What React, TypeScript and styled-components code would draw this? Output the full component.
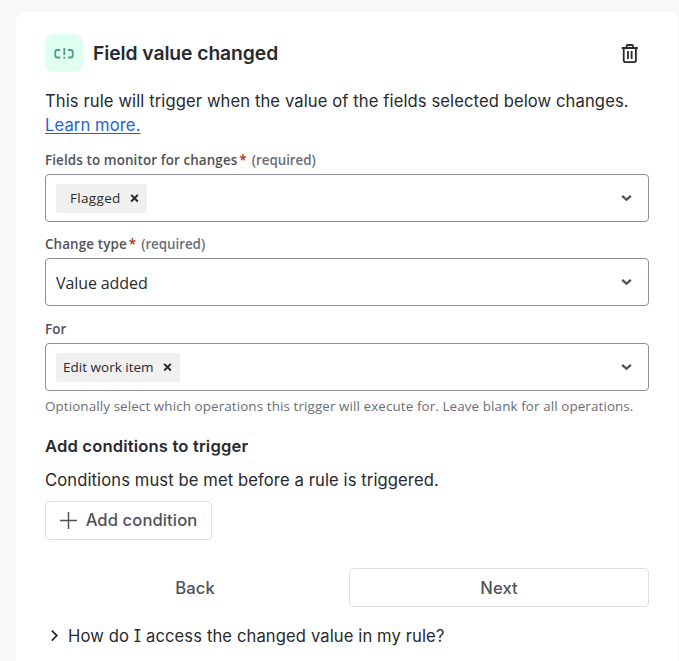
import React from "react";
import styled, { createGlobalStyle } from "styled-components";

const Global = createGlobalStyle`
  *, *::before, *::after { box-sizing: border-box; }
  body { margin: 0; background: #f8f8f8; overflow: hidden; color: #292a2e; }
  h1, h2, p { margin: 0; }
  button { font: inherit; letter-spacing: inherit; color: inherit; background: none; border: 0; padding: 0; cursor: pointer; }
  svg { display: block; flex: none; }
`;

const sans = `Inter, "Liberation Sans", sans-serif`;
const formSans = `"Open Sans", "Noto Sans", sans-serif`;

const Page = styled.main`
  height: 661px;
  padding: 12px 1px 0 16px;
  overflow: hidden;
  font: 400 16px/24px ${sans};
`;

const Card = styled.section`
  height: 700px;
  padding: 22px 29px 0;
  background: #fff;
  border-radius: 9px;
`;

const Header = styled.header`
  display: flex;
  align-items: center;
  height: 38px;
`;

const Badge = styled.span`
  display: flex;
  align-items: center;
  justify-content: center;
  width: 38px;
  height: 38px;
  margin-right: 10px;
  padding-top: 2px;
  border-radius: 9px;
  background: #dffff1;
`;

const Title = styled.h1`
  flex: 1;
  font-size: 19.3px;
  line-height: 24px;
  font-weight: 600;
  letter-spacing: -0.07px;
`;

const IconButton = styled.button`
  width: 38px;
  height: 38px;
  display: flex;
  align-items: center;
  justify-content: center;
`;

const Description = styled.p`
  margin-top: 17px;
  font-size: 16.6px;
  line-height: 24px;
  letter-spacing: 0.1px;
  white-space: nowrap;
`;

const Link = styled.a`
  color: #2463dc;
  text-decoration: underline;
  text-underline-offset: 2px;
`;

const Field = styled.div<{ $top: number }>`
  margin-top: ${(p) => p.$top}px;
  font-family: ${formSans};
`;

const Label = styled.div`
  height: 20px;
  margin-bottom: 4px;
  color: #505258;
  font-size: 13.4px;
  line-height: 20px;
  font-weight: 600;
  letter-spacing: 0.12px;
  white-space: nowrap;
`;

const Star = styled.span`
  margin: 0 5px 0 2px;
  color: #ae2e24;
`;

const Optional = styled.span`
  color: #6b6e76;
  letter-spacing: -0.05px;
`;

const Select = styled.div`
  display: flex;
  align-items: center;
  justify-content: space-between;
  height: 48px;
  padding: 0 16px 0 10px;
  border: 1px solid #8c8f97;
  border-radius: 4px;
`;

const Value = styled.span`
  padding-top: 2px;
  font-size: 16px;
  line-height: 24px;
  letter-spacing: -0.1px;
`;

const Tag = styled.span<{ $inset: number; $tracking?: number }>`
  display: flex;
  align-items: center;
  height: 29px;
  padding: 0 8px 0 ${(p) => p.$inset}px;
  border-radius: 2px;
  background: #f0f0f0;
  font-size: 13.5px;
  line-height: 20px;
  letter-spacing: ${(p) => p.$tracking ?? 0}px;
`;

const TagRemove = styled.button`
  margin-left: 9.5px;
`;

const Helper = styled.p`
  margin-top: 5px;
  color: #6b6e76;
  font: 400 13.4px/20px ${formSans};
  letter-spacing: 0.11px;
  white-space: nowrap;
`;

const Subheading = styled.h2`
  margin-top: 18px;
  font-size: 16.6px;
  line-height: 24px;
  font-weight: 600;
  letter-spacing: 0.16px;
`;

const Text = styled.p`
  margin-top: 10px;
  font-size: 16.6px;
  line-height: 24px;
  letter-spacing: 0.1px;
`;

const Button = styled.button<{ $outlined?: boolean }>`
  display: flex;
  align-items: center;
  justify-content: center;
  height: 39px;
  border: 1px solid ${(p) => (p.$outlined ? "#dddee1" : "transparent")};
  border-radius: 4px;
  color: #505258;
  font-size: 16.6px;
  font-weight: 500;
  letter-spacing: 0.1px;
`;

const AddButton = styled(Button)`
  width: 167px;
  margin-top: 9px;
  padding-bottom: 1px;
  gap: 9px;
`;

const Actions = styled.div`
  display: grid;
  grid-template-columns: 300px 300px;
  gap: 4px;
  margin-top: 28px;
`;

const Disclosure = styled.button`
  display: flex;
  align-items: center;
  gap: 9px;
  margin-top: 17px;
  padding-left: 5px;
  font-size: 16.6px;
  line-height: 24px;
`;

const DisclosureText = styled.span`
  letter-spacing: 0.11px;
  font-feature-settings: "cv08";
`;

const ValueIcon = () => (
  <svg width="20" height="14" viewBox="0 0 20 14" fill="none" stroke="#4aa27a" strokeWidth="1.8">
    <path d="M6.200 3H3.300Q1.300 3 1.300 5v3.500q0 2 2 2h2.900M14 3h2.700q2 0 2 2v3.500q0 2-2 2H14M10.300 1v7M10.300 9.800v2" />
  </svg>
);

const TrashIcon = () => (
  <svg width="18" height="20" viewBox="0 0 18 20" fill="none" stroke="#292a2e" strokeWidth="1.8">
    <path d="M.8 5h16M5.600 4.700V3q0-1 1-1H11q1 0 1 1v1.700M2.700 5v12.200q0 1.900 1.900 1.900H13q1.900 0 1.900-1.900V5M7 8v8M10.600 8v8" />
  </svg>
);

const ChevronDown = () => (
  <svg width="11" height="8" viewBox="0 0 11 8" fill="none" stroke="#505258" strokeWidth="2.300">
    <path d="M1.200 1.900l4.300 3.900 4.300-3.900" />
  </svg>
);

const Cross = () => (
  <svg width="9" height="9" viewBox="0 0 9 9" fill="none" stroke="#292a2e" strokeWidth="2">
    <path d="M1.200 0.900l6.600 6.600M7.800 0.900L1.200 7.500" />
  </svg>
);

const Plus = () => (
  <svg width="17" height="17" viewBox="0 0 17 17" fill="none" stroke="#505258" strokeWidth="1.500">
    <path d="M8.500 0v17M0 8.500h17" />
  </svg>
);

const ChevronRight = () => (
  <svg width="9" height="12" viewBox="0 0 9 12" fill="none" stroke="#292a2e" strokeWidth="1.800">
    <path d="M1.800 0.600l5 5-5 5" />
  </svg>
);

const FieldLabel = ({ text, required }: { text: string; required?: boolean }) => (
  <Label>
    {text}
    {required && (
      <>
        <Star>*</Star>
        <Optional>(required)</Optional>
      </>
    )}
  </Label>
);

const Chip = ({ text, inset, tracking }: { text: string; inset: number; tracking?: number }) => (
  <Tag $inset={inset} $tracking={tracking}>
    {text}
    <TagRemove aria-label={`Remove ${text}`}>
      <Cross />
    </TagRemove>
  </Tag>
);

export default function App() {
  return (
    <Page>
      <Global />
      <Card>
        <Header>
          <Badge>
            <ValueIcon />
          </Badge>
          <Title>Field value changed</Title>
          <IconButton aria-label="Delete">
            <TrashIcon />
          </IconButton>
        </Header>
        <Description>
          This rule will trigger when the value of the fields selected below changes.
          <br />
          <Link href="#">Learn more.</Link>
        </Description>
        <Field $top={13}>
          <FieldLabel text="Fields to monitor for changes" required />
          <Select>
            <Chip text="Flagged" inset={14} tracking={0.33} />
            <ChevronDown />
          </Select>
        </Field>
        <Field $top={12}>
          <FieldLabel text="Change type" required />
          <Select>
            <Value>Value added</Value>
            <ChevronDown />
          </Select>
        </Field>
        <Field $top={13}>
          <FieldLabel text="For" />
          <Select>
            <Chip text="Edit work item" inset={7} tracking={0.01} />
            <ChevronDown />
          </Select>
        </Field>
        <Helper>Optionally select which operations this trigger will execute for. Leave blank for all operations.</Helper>
        <Subheading>Add conditions to trigger</Subheading>
        <Text>Conditions must be met before a rule is triggered.</Text>
        <AddButton $outlined>
          <Plus />
          Add condition
        </AddButton>
        <Actions>
          <Button>Back</Button>
          <Button $outlined>Next</Button>
        </Actions>
        <Disclosure>
          <ChevronRight />
          <DisclosureText>How do I access the changed value in my rule?</DisclosureText>
        </Disclosure>
      </Card>
    </Page>
  );
}
